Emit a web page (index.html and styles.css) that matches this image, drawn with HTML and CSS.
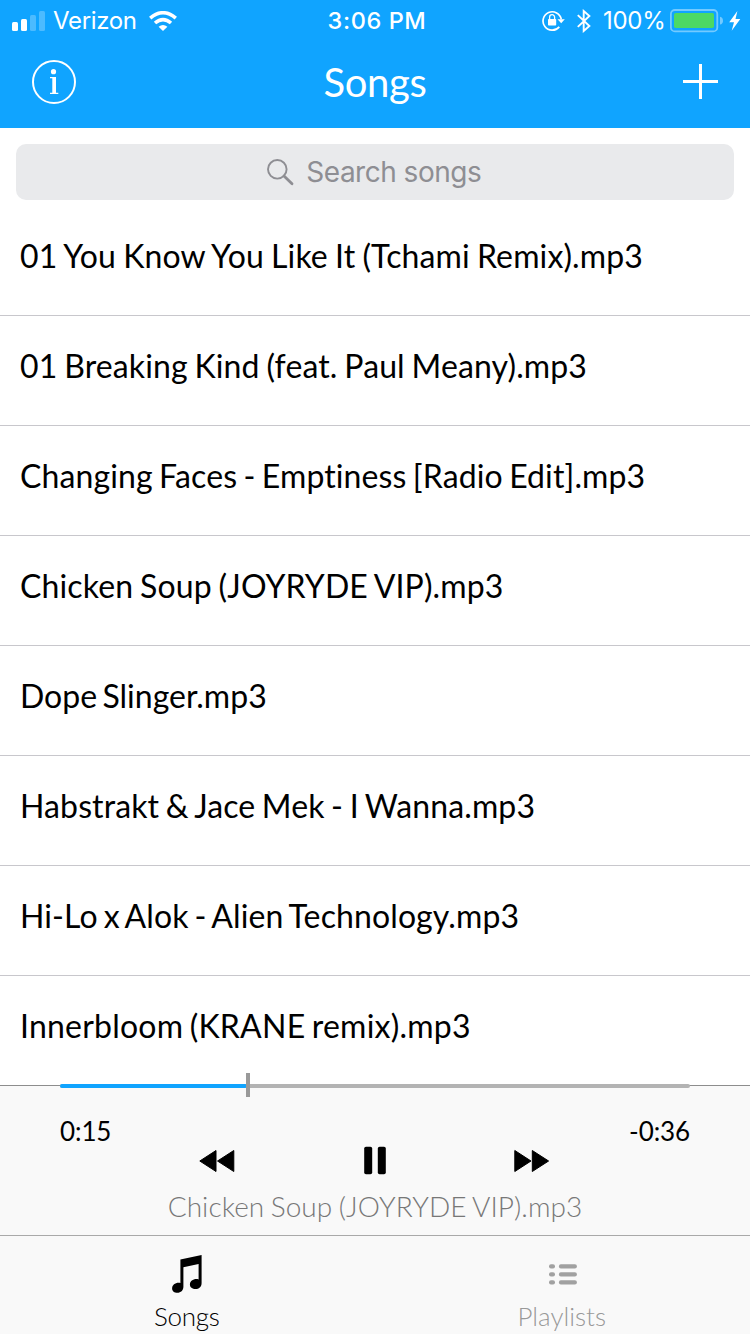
FILE: index.html
```html
<!DOCTYPE html>
<html lang="en">
<head>
<meta charset="utf-8">
<title>Songs</title>
<link rel="stylesheet" href="styles.css">
</head>
<body>
<div class="app">
  <header class="header">
    <div class="status">
      <div class="status-left">
        <svg class="signal" width="33" height="20" viewBox="0 0 33 20" fill="#fff"><rect y="11" width="6" height="9" rx="1.5"/><rect x="9" y="8" width="6" height="12" rx="1.5"/><rect x="18" y="4" width="6" height="16" rx="1.5" opacity=".25"/><rect x="27" width="6" height="20" rx="1.5" opacity=".25"/></svg>
        <span class="carrier">Verizon</span>
        <svg class="wifi" width="28" height="20" viewBox="0 0 28 20"><g fill="none" stroke="#fff" stroke-width="3.6"><path d="M1.2 7.1Q14-3.6 26.8 7.1"/><path d="M6 12Q14 5.2 22 12"/></g><path d="M9.6 15.8Q14 12 18.4 15.8L14 20z" fill="#fff"/></svg>
      </div>
      <span class="time">3:06 PM</span>
      <div class="status-right">
        <svg class="lock" width="24" height="22" viewBox="0 0 24 22"><path d="M17.3 16.9A9.2 9.2 0 1 1 19.3 9.4" fill="none" stroke="#fff" stroke-width="1.7"/><path d="M15.5 9.3h7.3L19.2 13.2z" fill="#fff"/><rect x="6" y="9" width="8.2" height="6.5" rx=".8" fill="#fff"/><path d="M7.6 9.2V7.2a2.5 2.5 0 0 1 5 0v2" fill="none" stroke="#fff" stroke-width="1.3"/></svg>
        <svg class="bluetooth" width="14" height="24" viewBox="0 0 14 24"><path d="M.8 6.1L12.4 17 6.7 22V2L12.4 7 .8 17.9" fill="none" stroke="#fff" stroke-width="1.9"/></svg>
        <span class="percent">100%</span>
        <svg class="battery" width="54" height="24" viewBox="0 0 54 24"><rect x=".9" y="1" width="46.4" height="21.4" rx="4" fill="none" stroke="#fff" stroke-opacity=".42" stroke-width="1.8"/><rect x="4" y="4" width="40" height="15" rx="1.8" fill="#4cd964"/><path d="M50 7.8Q53 8.5 53 11.7T50 15.6z" fill="#fff" opacity=".42"/></svg>
        <svg class="bolt" width="12" height="20" viewBox="0 0 12 20"><path d="M8.4 0L.2 11.2H5L2.7 19.8 11.3 8H6.5z" fill="#fff"/></svg>
      </div>
    </div>
    <nav class="nav">
      <svg width="44" height="44" viewBox="0 0 44 44"><circle cx="22" cy="22" r="21" fill="none" stroke="#fff" stroke-width="2"/><circle cx="21.5" cy="11.7" r="2.6" fill="#fff"/><path d="M18 17h6v15.8h2.3V34H18v-1.2h2.3V18.2H18z" fill="#fff"/></svg>
      <h1 class="title">Songs</h1>
      <svg class="plus" width="35" height="35" viewBox="0 0 35 35"><path d="M0 17.5h35M17.5 0v35" stroke="#fff" stroke-width="3"/></svg>
    </nav>
  </header>
  <div class="search">
    <div class="search-field">
      <svg width="27" height="27" viewBox="0 0 27 27" fill="none" stroke="#8e8e93"><circle cx="10.3" cy="10.3" r="9.3" stroke-width="1.9"/><path d="M17 17l8 7.7" stroke-width="2.8" stroke-linecap="round"/></svg>
      <span class="placeholder">Search songs</span>
    </div>
  </div>
  <ul class="songs">
    <li class="song"><span class="song-name">01 You Know You Like It (Tchami Remix).mp3</span></li>
    <li class="song"><span class="song-name">01 Breaking Kind (feat. Paul Meany).mp3</span></li>
    <li class="song"><span class="song-name">Changing Faces - Emptiness [Radio Edit].mp3</span></li>
    <li class="song"><span class="song-name">Chicken Soup (JOYRYDE VIP).mp3</span></li>
    <li class="song"><span class="song-name">Dope Slinger.mp3</span></li>
    <li class="song"><span class="song-name">Habstrakt &amp; Jace Mek - I Wanna.mp3</span></li>
    <li class="song"><span class="song-name">Hi-Lo x Alok - Alien Technology.mp3</span></li>
    <li class="song"><span class="song-name">Innerbloom (KRANE remix).mp3</span></li>
  </ul>
  <section class="player">
    <div class="slider"><div class="elapsed"></div><div class="thumb"></div></div>
    <div class="times"><span>0:15</span><span>-0:36</span></div>
    <div class="controls">
      <svg width="36" height="30" viewBox="0 0 36 30"><path d="M.8 16L17 5.5v21zM18.5 16L34.8 5.5v21z" stroke="#000" stroke-linejoin="round"/></svg>
      <svg width="24" height="30" viewBox="0 0 24 30"><rect x="1.2" y="1.8" width="8" height="27.4" rx="1.8"/><rect x="14.8" y="1.8" width="8" height="27.4" rx="1.8"/></svg>
      <svg width="36" height="30" viewBox="0 0 36 30"><path d="M.8 5.5v21L17 16zM18.3 5.5v21L34.6 16z" stroke="#000" stroke-linejoin="round"/></svg>
    </div>
    <div class="now-playing"><span class="now-name">Chicken Soup (JOYRYDE VIP).mp3</span></div>
  </section>
  <nav class="tabs">
    <div class="tab tab-active">
      <svg width="32" height="38" viewBox="0 0 32 38"><path d="M8.4 4.4L29.6 0V28c0 4-2.8 6-6 6-3.3 0-5.7-1.7-5.7-4.5 0-3.2 3-5.5 6.5-5.5.8 0 1.5.1 2.2.4V9L11.4 12.2V31.8c0 3.7-2.7 6-6 6-3 0-5.3-1.6-5.3-4.4 0-3.3 3-5.6 6.4-5.6.7 0 1.3.1 1.9.3z"/></svg>
      <span class="tab-label">Songs</span>
    </div>
    <div class="tab">
      <svg width="28" height="38" viewBox="0 0 28 38" fill="#a1a1a1"><rect y="9.2" width="6" height="4.2" rx="2"/><rect x="9.9" y="9.2" width="18" height="4.2" rx="2"/><rect y="17.2" width="6" height="4.2" rx="2"/><rect x="9.9" y="17.2" width="18" height="4.2" rx="2"/><rect y="25.2" width="6" height="4.2" rx="2"/><rect x="9.9" y="25.2" width="18" height="4.2" rx="2"/></svg>
      <span class="tab-label tab-label-wide">Playlists</span>
    </div>
  </nav>
</div>
</body>
</html>
```
FILE: styles.css
```css
* { box-sizing: border-box; }
body { margin: 0; background: #fff; color: #000; font-family: Lato, sans-serif; font-variant-ligatures: none; }
svg { display: block; flex: none; }
.app { width: 750px; height: 1334px; display: flex; flex-direction: column; overflow: hidden; }
.header { height: 128px; background: #10a4ff; color: #fff; flex: none; }
.status { height: 40px; display: grid; grid-template-columns: 1fr auto 1fr; align-items: center; padding: 0 9px 0 12px; font: 24px/40px Inter, sans-serif; white-space: nowrap; }
.status-left, .status-right { display: flex; align-items: center; height: 40px; }
.status-right { justify-content: flex-end; }
.carrier { width: 83px; margin: 1px 13px 0 8px; letter-spacing: -.35px; }
.time { margin: 1px 0 0 1px; font-weight: 500; font-size: 23.5px; letter-spacing: .6px; }
.lock { margin-right: 11px; }
.percent { width: 61px; margin: 1px 6px 0 12px; letter-spacing: -.3px; }
.battery { margin-top: 1px; }
.bolt { margin-left: 5px; }
.nav { height: 88px; display: grid; grid-template-columns: 1fr auto 1fr; align-items: center; padding: 0 32px 4px; }
.title { margin: -1px 0 0; font-weight: 400; font-size: 40px; line-height: 48px; letter-spacing: -.3px; }
.plus { justify-self: end; margin-top: -1px; }
.search { flex: none; height: 78px; padding: 16px 16px 22px; }
.search-field { height: 56px; border-radius: 10px; background: #e9eaec; color: #8e8e93; display: flex; align-items: center; justify-content: center; gap: 12.5px; padding-right: 2px; font: 28px/56px Inter, sans-serif; }
.placeholder { letter-spacing: -.5px; }
.songs { flex: none; list-style: none; margin: 0; padding: 0; height: 879px; overflow: hidden; }
.song { height: 110px; border-bottom: 1px solid #c8c7cc; padding: 0 20px 9px; display: flex; align-items: center; font-size: 32px; line-height: 40px; letter-spacing: .12px; word-spacing: -2px; white-space: nowrap; }
.song:nth-child(1) { word-spacing: -1.15px; }
.song:nth-child(2) { word-spacing: -1.5px; }
.song:nth-child(4) { word-spacing: -1.4px; }
.song:nth-child(5) { letter-spacing: 0; word-spacing: -2.8px; }
.song:nth-child(6) { word-spacing: -1.8px; }
.song:nth-child(7) { word-spacing: -2.4px; }
.song:nth-child(8) { letter-spacing: .22px; }
.player { flex: none; height: 150px; background: #f9f9f9; border-top: 1px solid #8d8d8d; }
.slider { position: relative; height: 4px; margin: -2px 60px 0; border-radius: 2px; background: #b3b3b3; }
.elapsed { width: 187px; height: 4px; border-radius: 2px; background: #10a4ff; }
.thumb { position: absolute; left: 186px; top: -11px; width: 4px; height: 24px; background: #999; }
.times { display: flex; justify-content: space-between; padding: 27px 60px 0; height: 57px; font-size: 26px; line-height: 32px; letter-spacing: -.1px; }
.controls { height: 30px; display: flex; justify-content: space-between; padding: 0 200px 0 199px; }
.now-playing { text-align: center; font-size: 28px; line-height: 34px; padding-top: 14px; font-weight: 300; color: #777; letter-spacing: .06px; word-spacing: -1.2px; white-space: nowrap; }
.tabs { flex: none; height: 99px; background: #f9f9f9; border-top: 1px solid #a9a9a9; display: grid; grid-template-columns: 1fr 1fr; }
.tab { display: flex; flex-direction: column; align-items: center; padding-top: 19px; font-weight: 300; font-size: 26px; line-height: 32px; gap: 7px; color: #999; }
.tab-active { color: #000; }
.tab-label { margin-right: 1.5px; letter-spacing: -.25px; }
.tab-label-wide { letter-spacing: 0; }
```
